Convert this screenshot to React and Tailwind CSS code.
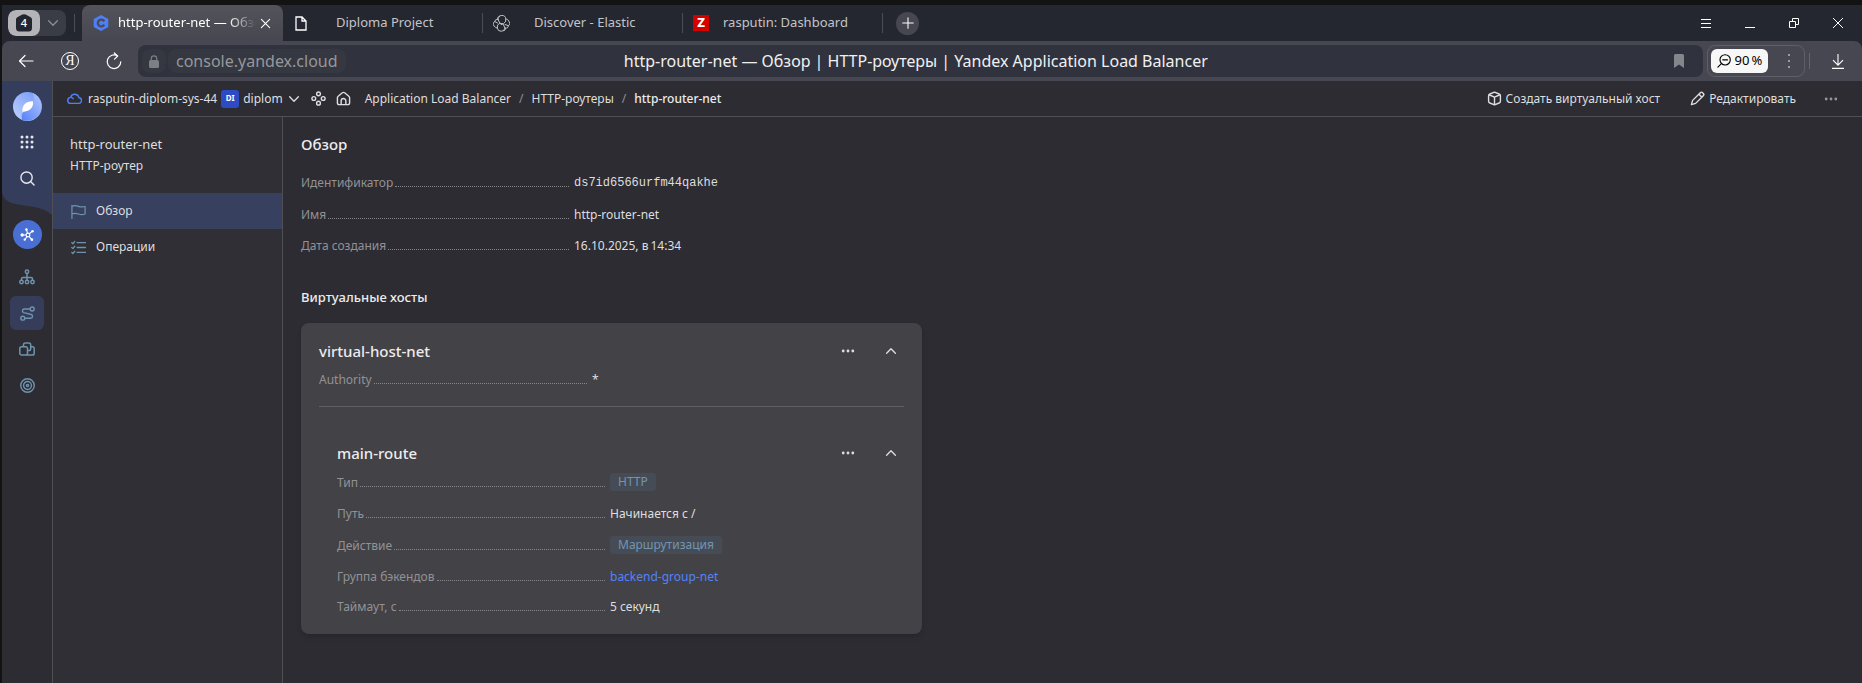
import React from 'react';

function Icon({ children, className = 'size-[15px]', width = 1.5, box = '0 0 16 16' }) {
  return (
    <svg
      viewBox={box}
      className={`shrink-0 ${className}`}
      fill="none"
      stroke="currentColor"
      strokeWidth={width}
      strokeLinecap="round"
      strokeLinejoin="round"
      aria-hidden="true"
    >
      {children}
    </svg>
  );
}

const Dots = ({ className }) => (
  <Icon className={className} width={0}>
    <g fill="currentColor">
      <circle cx="2.5" cy="8" r="1.6" />
      <circle cx="8" cy="8" r="1.6" />
      <circle cx="13.5" cy="8" r="1.6" />
    </g>
  </Icon>
);

const Chevron = ({ up, className }) => (
  <Icon className={className}>
    <path d={up ? 'M3 10.5 8 5.5l5 5' : 'M3 5.5l5 5 5-5'} />
  </Icon>
);

const Divider = () => <span className="h-5 w-px shrink-0 bg-[#4b4d56]" />;

function TabBar() {
  return (
    <div className="flex h-9 items-end bg-[#242730] text-[13px] text-[#c3c4c8]">
      <div className="ml-1.5 flex h-[26px] shrink-0 self-center overflow-hidden rounded-lg bg-[#3a3c46]">
        <button aria-label="Группа вкладок" className="flex w-8 items-center justify-center rounded-lg bg-[#b4b3b7]">
          <span className="relative flex size-[18px] items-center justify-center text-[11px] font-medium text-white">
            <svg viewBox="0 0 18 18" className="absolute inset-0" aria-hidden="true">
              <path d="M7.300.6a3.500 3.500 0 0 1 3.400 0l5 2.600A2.500 2.500 0 0 1 17 5.400V14a3.500 3.500 0 0 1-3.500 3.500h-9A3.500 3.500 0 0 1 1 14V5.400A2.500 2.500 0 0 1 2.300 3.200z" fill="#24262f" />
            </svg>
            <span className="relative">4</span>
          </span>
        </button>
        <button aria-label="Список групп" className="flex w-[26px] items-center justify-center text-[#8c8d94]">
          <Chevron className="size-3.5" />
        </button>
      </div>
      <span className="mr-[7px] ml-2 h-[18px] w-px shrink-0 self-center bg-[#4b4d56]" />
      <div className="flex h-9 w-[201px] shrink-0 items-center rounded-t-lg bg-linear-to-b from-[#53535b] to-[#474751] pl-[11px] text-white">
        <svg viewBox="0 0 16 16" className="size-4 shrink-0" aria-hidden="true">
          <path d="M8 0l7.3 4v8L8 16 .7 12V4z" fill="#4f7ff7" />
          <path d="M11.200 6.300A3.400 3.400 0 1 0 11.200 9.700" fill="none" stroke="#4b4b54" strokeWidth="2.400" />
        </svg>
        <a href="#" className="ml-[9px] w-[138px] overflow-hidden whitespace-nowrap mask-r-from-80% mask-r-to-100%">http-router-net — Обзор</a>
        <button aria-label="Закрыть вкладку" className="ml-1">
          <Icon className="size-[11px]" width={1.6}><path d="M2 2l12 12M14 2 2 14" /></Icon>
        </button>
      </div>
      <div className="flex h-9 items-center">
        <a href="#" className="flex w-[199px] items-center pl-3">
          <svg viewBox="0 0 12 15" className="h-[15px] w-3 shrink-0" fill="none" stroke="#fff" strokeWidth="1.3" aria-hidden="true">
            <path d="M1 1h6l4 4v9H1zM7 1v4h4" />
          </svg>
          <span className="ml-[29px] whitespace-nowrap">Diploma Project</span>
        </a>
        <Divider />
        <a href="#" className="flex w-[199px] items-center pl-2.5">
          <Icon className="size-[17px]" width={1} box="0 0 17 17">
            <path d="M6.500 7.500 5 4.500A3.900 3.900 0 0 1 12.800 4.200 4 4 0 0 1 10.500 8.500L8.500 9.500zM10.200 9.300 12 13A3.900 3.900 0 0 1 4.300 13 4 4 0 0 1 6.500 8.300z" />
            <path d="M5 4.600A2.200 2.200 0 0 0 1.800 6.500L4.500 8M1.800 6.500A2.700 2.700 0 0 0 2 11.600a2 2 0 0 0 2.200 1.400M12.800 4.200A2 2 0 0 1 15.500 6a2.700 2.700 0 0 1-.2 4.700L12 9.500M15.300 10.700A2.200 2.200 0 0 1 12.200 13M5 4.600A1.900 1.900 0 0 1 6.500 1.600M12 13a1.700 1.700 0 0 1-1.500 2.700" />
          </Icon>
          <span className="ml-6 whitespace-nowrap">Discover - Elastic</span>
        </a>
        <Divider />
        <a href="#" className="flex w-[199px] items-center pl-2.5">
          <span className="flex size-4 shrink-0 items-center justify-center bg-[#d40000] text-[13px] font-extrabold text-white">Z</span>
          <span className="ml-[14px] whitespace-nowrap">rasputin: Dashboard</span>
        </a>
        <Divider />
        <button aria-label="Новая вкладка" className="ml-[13px] flex size-[23px] items-center justify-center rounded-full bg-[#474751] text-white">
          <Icon className="size-3" width={1.4}><path d="M8 1v14M1 8h14" /></Icon>
        </button>
      </div>
      <div className="ml-auto flex h-9 pr-0.5 text-white">
        <button aria-label="Меню" className="flex w-11 items-center justify-center">
          <svg viewBox="0 0 10 9" className="h-[9px] w-2.5" aria-hidden="true"><path d="M0 0h10v1H0zM0 4h10v1H0zM0 8h10v1H0z" fill="currentColor" /></svg>
        </button>
        <button aria-label="Свернуть" className="flex w-11 items-center justify-center">
          <svg viewBox="0 0 10 9" className="h-[9px] w-2.5" aria-hidden="true"><path d="M0 8h10v1H0z" fill="currentColor" /></svg>
        </button>
        <button aria-label="Развернуть" className="flex w-11 items-center justify-center">
          <svg viewBox="0 0 10 10" className="size-2.5" fill="none" stroke="currentColor" aria-hidden="true"><path d="M.5 3.5h6v6h-6zM3.5 3.5v-3h6v6h-3" /></svg>
        </button>
        <button aria-label="Закрыть" className="flex w-11 items-center justify-center">
          <svg viewBox="0 0 10 10" className="size-2.5" stroke="currentColor" aria-hidden="true"><path d="M0 0l10 10M10 0 0 10" /></svg>
        </button>
      </div>
    </div>
  );
}

function AddressBar() {
  return (
    <div className="bg-[#242730]">
      <div className="flex h-10 items-center rounded-t-lg bg-[#474751] text-white">
        <button aria-label="Назад" className="flex w-12 justify-center">
          <Icon className="size-4" width={1.2}><path d="M15 8H1.5M7 2.5 1.5 8 7 13.5" /></Icon>
        </button>
        <button aria-label="Яндекс" className="flex w-10 justify-center">
          <span className="flex size-[18px] items-center justify-center rounded-full border border-white font-['Liberation_Serif',serif] text-sm leading-none">Я</span>
        </button>
        <button aria-label="Обновить" className="flex w-12 justify-center">
          <Icon className="size-[18px]" width={1.2} box="0 0 18 18">
            <path d="M12.5 3.9A6.8 6.8 0 1 0 15.8 9.8M9.3 1l3.4 3L9.5 7.2" />
          </Icon>
        </button>
        <div className="flex h-8 flex-1 items-center rounded-lg bg-[#30333d]">
          <span className="ml-1 flex size-6 items-center justify-center rounded-lg bg-[#353741] text-[#7d7f86]">
            <svg viewBox="0 0 10 13" className="h-[13px] w-2.5" aria-hidden="true">
              <rect y="5" width="10" height="8" rx="1.5" fill="currentColor" />
              <path d="M2.3 5.5V3.6a2.7 2.7 0 0 1 5.4 0v1.9" fill="none" stroke="currentColor" strokeWidth="1.2" />
            </svg>
          </span>
          <span className="ml-0.5 rounded-lg bg-[#353741] px-2 text-base leading-6 text-[#96979c]">console.yandex.cloud</span>
          <span className="flex-1 pr-[188px] text-center text-base leading-6 text-[#f0f0f1]">http-router-net — Обзор | HTTP-роутеры | Yandex Application Load Balancer</span>
          <button aria-label="Закладка" className="mr-[19px]">
            <svg viewBox="0 0 10 14" className="h-3.5 w-2.5" aria-hidden="true"><path d="M0 1.5A1.5 1.5 0 0 1 1.5 0h7A1.5 1.5 0 0 1 10 1.5V14L5 10.5 0 14z" fill="#85868b" /></svg>
          </button>
        </div>
        <div className="ml-1 flex h-8 items-center rounded-lg border border-[#5f5f68] pl-[3px]">
          <button className="flex h-6 w-[57px] items-center justify-center gap-1 rounded-md bg-[#f7f7f8] text-[13px] whitespace-nowrap text-black">
            <Icon className="size-3.5" width={1.3}><circle cx="9.300" cy="6.700" r="5.900" /><path d="M6.500 6.700h5.600M5 11 1 15" /></Icon>
            90{'\u2009'}%
          </button>
          <button aria-label="Ещё" className="flex w-9 justify-center pl-1.5 text-[#9a9aa0]">
            <svg viewBox="0 0 2 14" className="h-3.5 w-0.5" aria-hidden="true"><path d="M0 0h2v2H0zM0 6h2v2H0zM0 12h2v2H0z" fill="currentColor" /></svg>
          </button>
        </div>
        <span className="ml-1 h-4 w-px bg-[#65656d]" />
        <button aria-label="Загрузки" className="flex w-[52px] justify-center pl-1">
          <svg viewBox="0 0 12 15" className="h-[15px] w-3" fill="none" stroke="currentColor" strokeWidth="1.1" aria-hidden="true"><path d="M6 0v11M1 6.2l5 5 5-5M0 14.4h12" /></svg>
        </button>
      </div>
    </div>
  );
}

function RailButton({ label, active, children }) {
  return (
    <button
      aria-label={label}
      className={`flex size-[34px] items-center justify-center rounded-md text-[#6f93ad] ${active ? 'bg-[#353d5a]' : ''}`}
    >
      {children}
    </button>
  );
}

function Rail() {
  return (
    <aside className="flex w-[51px] shrink-0 flex-col border-r border-[#505054] bg-[#2d2c33]">
      <div className="flex flex-col items-center bg-[#353d5c] pt-[11px] text-[#e6e7ec]">
        <a href="#" aria-label="Yandex Cloud" className="mb-[7px]">
          <svg viewBox="0 0 29 29" className="size-[29px]" aria-hidden="true">
            <defs>
              <linearGradient id="lobe" x1="0" y1="1" x2="1" y2="0">
                <stop offset="0" stopColor="#c3d3fc" />
                <stop offset="1" stopColor="#6e95f8" />
              </linearGradient>
              <linearGradient id="lobe2" x1="0" y1="1" x2="1" y2="0">
                <stop offset="0" stopColor="#5682f8" />
                <stop offset="1" stopColor="#b4c8fc" />
              </linearGradient>
            </defs>
            <circle cx="14.5" cy="14.5" r="14.5" fill="url(#lobe)" />
            <path d="M20 1.1A14.5 14.5 0 0 1 9 27.9C8 22 9 20 14 18.500C20 16 22 9 20 1.100z" fill="url(#lobe2)" />
            <path d="M20 9.200C21 16 16 19.500 9.300 19.800C9 13 13 9 20 9.200z" fill="#fff" />
          </svg>
        </a>
        <button aria-label="Все сервисы" className="mb-2 flex h-7 items-center">
          <svg viewBox="0 0 14 14" className="size-3.5" fill="currentColor" aria-hidden="true">
            {[2, 7, 12].map((y) => [2, 7, 12].map((x) => <circle key={`${x}-${y}`} cx={x} cy={y} r="1.5" />))}
          </svg>
        </button>
        <button aria-label="Поиск" className="flex h-7 items-center">
          <Icon><circle cx="7" cy="7" r="6" /><path d="M11.500 11.500 15 15" /></Icon>
        </button>
      </div>
      <svg viewBox="0 0 50 23" preserveAspectRatio="none" className="h-[23px] w-full shrink-0" aria-hidden="true">
        <path d="M0 0H50V23C40 14 28 15 16 12.500C6 11 1 7 0 0z" fill="#353d5c" />
      </svg>
      <div className="mt-[5px] flex flex-col items-center">
        <button aria-label="Application Load Balancer" className="mb-[11px] flex size-[29px] items-center justify-center rounded-full bg-[#4a6fd4] text-white">
          <Icon width={1.2}>
            <path d="M8.500 8.500H2.500M8.500 8.500 7 3M8.500 8.500 12.500 5M8.500 8.500l3.500 4.500M8.500 8.500 5.500 13" />
            <circle cx="8.500" cy="8.500" r="2" fill="#4a6fd4" />
            <g fill="currentColor" stroke="none"><circle cx="2.300" cy="8.500" r="1.800" /><circle cx="6.800" cy="2.700" r="1.300" /><circle cx="13.300" cy="4.500" r="1.400" /><circle cx="12.700" cy="13.500" r="1.400" /><circle cx="5" cy="13.500" r="1.200" /></g>
          </Icon>
        </button>
        <div className="flex flex-col gap-0.5">
          <RailButton label="Балансировщики">
            <Icon className="size-4">
              <circle cx="8" cy="2.800" r="1.700" /><circle cx="2.500" cy="13" r="1.700" /><circle cx="8" cy="13" r="1.700" /><circle cx="13.500" cy="13" r="1.700" />
              <path d="M8 4.500v6.800M2.500 11.300V10A1.500 1.500 0 0 1 4 8.500h8A1.500 1.500 0 0 1 13.500 10v1.300" />
            </Icon>
          </RailButton>
          <RailButton label="HTTP-роутеры" active>
            <Icon className="size-[15px]">
              <circle cx="13" cy="3.200" r="2.100" /><circle cx="3" cy="13" r="2.100" />
              <path d="M10.900 3.200H4.500A2 2 0 0 0 4 7.100l8 2A2 2 0 0 1 11.500 13H5.100" />
            </Icon>
          </RailButton>
          <RailButton label="Группы бэкендов">
            <Icon className="size-4">
              <path d="M8.500 7.500A1.800 1.800 0 0 0 6.700 5.700H2.600A1.800 1.800 0 0 0 .8 7.500v4.700A1.800 1.800 0 0 0 2.600 14h10.800a1.800 1.800 0 0 0 1.800-1.800V7.500a1.800 1.800 0 0 0-1.800-1.800h-1.700M8.500 7.500v4.700A1.800 1.800 0 0 1 6.700 14M4.500 5.700V3.800A1.800 1.800 0 0 1 6.300 2h3.600a1.800 1.800 0 0 1 1.800 1.800v3.900A1.800 1.800 0 0 1 9.900 9.500H8.500" />
            </Icon>
          </RailButton>
          <RailButton label="Целевые группы">
            <Icon><circle cx="8" cy="8" r="7.200" /><circle cx="8" cy="8" r="4.200" /><circle cx="8" cy="8" r="1.200" /></Icon>
          </RailButton>
        </div>
      </div>
    </aside>
  );
}

function PageHeader() {
  return (
    <header className="flex h-9 items-center border-b border-[#505054] pr-6 pl-3.5 whitespace-nowrap">
      <a href="#" className="flex items-center">
        <Icon className="mr-1.5 size-[15px] text-[#4f7ff7]">
          <path d="M4 13.200h8.200a3 3 0 0 0 .6-6A4.600 4.600 0 0 0 4 6.300M4 13.200A3.200 3.200 0 0 1 4 6.800c1.200 0 2 .5 2.600 1.300" />
        </Icon>
        rasputin-diplom-sys-44
      </a>
      <a href="#" className="ml-1 flex items-center">
        <span className="mr-1 flex size-[18px] items-center justify-center rounded-[3px] bg-[#2e4bc6] text-[8px] font-bold text-white">DI</span>
        diplom
      </a>
      <button aria-label="Выбрать каталог" className="ml-1"><Chevron className="size-3.5" /></button>
      <button aria-label="Ресурсы" className="ml-2.5">
        <Icon><circle cx="8" cy="3" r="2" /><circle cx="3" cy="8" r="2" /><circle cx="13" cy="8" r="2" /><circle cx="8" cy="13" r="2" /></Icon>
      </button>
      <a href="#" aria-label="Главная" className="ml-2.5">
        <Icon><path d="M1.500 7.200V12.500a2 2 0 0 0 2 2h9a2 2 0 0 0 2-2V7.200a2 2 0 0 0-.8-1.600L9.200 1.900a2 2 0 0 0-2.400 0L2.300 5.600a2 2 0 0 0-.8 1.600zM5.500 14.500V10.500a2.500 2.500 0 0 1 5 0v4" /></Icon>
      </a>
      <nav aria-label="Навигация" className="ml-3.5 flex items-center gap-2">
        <a href="#">Application Load Balancer</a>
        <span className="text-[#8f8f93]">/</span>
        <a href="#">HTTP-роутеры</a>
        <span className="text-[#8f8f93]">/</span>
        <a href="#" className="font-medium text-[#ececed]">http-router-net</a>
      </nav>
      <div className="ml-auto flex items-center">
        <button className="flex items-center gap-1">
          <Icon><path d="M8 1.200 13 3.200a2 2 0 0 1 1.300 1.900v5.800a2 2 0 0 1-1.300 1.900L8 14.800 3 12.800a2 2 0 0 1-1.300-1.900V5.100A2 2 0 0 1 3 3.200zM2.200 4 8 6.500 13.800 4M8 6.500v8" /></Icon>
          Создать виртуальный хост
        </button>
        <button className="ml-[30px] flex items-center gap-1">
          <Icon><path d="M11 1.800a1.700 1.700 0 0 1 2.400 0l.8.800a1.700 1.700 0 0 1 0 2.400L6 13.200 1.500 14.500 2.800 10zM9.500 3.500l3 3" /></Icon>
          Редактировать
        </button>
        <button aria-label="Ещё" className="ml-7 text-[#97979b]"><Dots className="size-3.5" /></button>
      </div>
    </header>
  );
}

function SideNav() {
  return (
    <div className="w-[230px] shrink-0 border-r border-[#505054] bg-[#302f35]">
      <div className="px-[17px] pt-[17px] pb-[19px]">
        <div className="text-[13px] leading-5">http-router-net</div>
        <div className="mt-1 leading-4">HTTP-роутер</div>
      </div>
      <nav>
        <a href="#" className="flex h-9 items-center gap-2.5 bg-[#38405f] px-[18px]">
          <Icon className="size-[15px] text-[#6f93ad]" width={1.3}>
            <path d="M1 1.500v14M1 2.500c3-1.500 4.500-1 7 0s4 1 7 .2v8c-3 1-4.500.8-7 0s-4-1.200-7 0" />
          </Icon>
          Обзор
        </a>
        <a href="#" className="flex h-9 items-center gap-2.5 px-[18px]">
          <Icon className="size-[15px] text-[#6f93ad]" width={1.4}>
            <path d="M6.500 2.800H15.500M6.500 8H15.500M6.500 13.200H15.500M.8 2.800l1.200 1.200L4 1.500M.8 8 2 9.200l2-2.500M.8 13.200l1.200 1.200L4 12" />
          </Icon>
          Операции
        </a>
      </nav>
    </div>
  );
}

function Row({ label, children }) {
  return (
    <div className="flex items-center leading-[15px]">
      <dt className="flex w-[273px] shrink-0 items-end pr-[5px] text-[#929295]">
        {label}
        <span className="mb-[3px] ml-0.5 flex-1 border-b border-dotted border-[#87878b]" />
      </dt>
      <dd>{children}</dd>
    </div>
  );
}

const Tag = ({ children }) => (
  <span className="block rounded-[3px] bg-[#464c56] px-2 leading-[18px] text-[#7195b2]">{children}</span>
);

function BlockHeader({ title }) {
  return (
    <div className="flex h-6 items-center">
      <h3 className="flex-1 text-[15px] font-medium text-[#ececed]">{title}</h3>
      <button aria-label="Действия" className="mr-[29px]"><Dots className="size-3.5" /></button>
      <button aria-label="Свернуть блок" className="mr-1.5"><Chevron up className="size-3.5" /></button>
    </div>
  );
}

function Overview() {
  return (
    <main className="min-w-0 flex-1 px-[18px] pt-[17px] pb-12">
      <h1 className="text-[15px] leading-5 font-medium text-[#ececed]">Обзор</h1>
      <dl className="mt-5 flex flex-col gap-4">
        <Row label="Идентификатор"><span className="font-['Liberation_Mono',monospace]">ds7id6566urfm44qakhe</span></Row>
        <Row label="Имя">http-router-net</Row>
        <Row label="Дата создания">16.10.2025, в{'\u2009'}14:34</Row>
      </dl>
      <h2 className="mt-[34px] text-[13px] leading-5 font-medium text-[#ececed]">Виртуальные хосты</h2>
      <section className="mt-4 max-w-[621px] rounded-lg bg-[#434247] px-[18px] pt-4 pb-5 shadow-md">
        <BlockHeader title="virtual-host-net" />
        <dl className="mt-[9px]"><Row label="Authority">*</Row></dl>
        <hr className="mt-[19px] border-[#5f5e63]" />
        <div className="mt-[34px] pl-[18px]">
          <BlockHeader title="main-route" />
          <dl className="mt-2 flex flex-col gap-[15px]">
            <Row label="Тип"><Tag>HTTP</Tag></Row>
            <Row label="Путь">Начинается с /</Row>
            <Row label="Действие"><Tag>Маршрутизация</Tag></Row>
            <Row label="Группа бэкендов"><a href="#" className="text-[#5282ff]">backend-group-net</a></Row>
            <Row label="Таймаут, с">5 секунд</Row>
          </dl>
        </div>
      </section>
    </main>
  );
}

export default function App() {
  return (
    <div className="flex min-h-screen flex-col bg-[#131313] pt-[5px] pl-0.5 font-['Noto_Sans',sans-serif]">
      <TabBar />
      <AddressBar />
      <div className="flex flex-1 bg-[#2d2c33] text-xs text-[#dededf]">
        <Rail />
        <div className="flex min-w-0 flex-1 flex-col">
          <PageHeader />
          <div className="flex flex-1">
            <SideNav />
            <Overview />
          </div>
        </div>
      </div>
    </div>
  );
}
